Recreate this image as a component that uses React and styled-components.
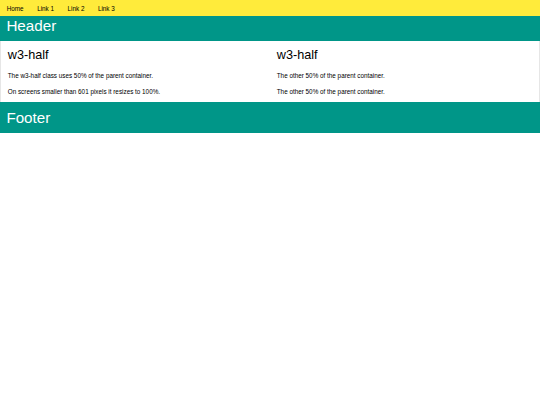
import React from 'react'
import styled, { createGlobalStyle } from 'styled-components'

const GlobalStyle = createGlobalStyle`
  * {
    box-sizing: border-box;
  }
  html, body {
    margin: 0;
    padding: 0;
    background: #ffffff;
  }
  body {
    font-family: 'Liberation Sans', Arial, sans-serif;
    font-size: 6.33px;
    line-height: 1.5;
    color: #000000;
  }
`

const Nav = styled.nav`
  display: flex;
  background: #ffeb3b;
  color: #000000;
  height: 16.25px;
`

const NavLink = styled.a`
  display: block;
  padding: 3.6px 6.75px 3.15px;
  color: inherit;
  text-decoration: none;
  white-space: nowrap;
  font-size: 6.33px;
  line-height: 1.5;
`

const Banner = styled.header`
  background: #009688;
  color: #ffffff;
  padding: ${(p) => (p.$top ? '1.4px 6.4px 0' : '0.01em 6.4px')};
  height: ${(p) => (p.$top ? '24.45px' : 'auto')};
  overflow: hidden;
`

const BannerTitle = styled.h1`
  font-family: 'Liberation Sans', Arial, sans-serif;
  font-weight: 400;
  font-size: 15.19px;
  line-height: ${(p) => (p.$tight ? 1 : 1.5)};
  margin: ${(p) => (p.$tight ? 0 : '5.4px 0 3.04px')};
`

const Row = styled.div`
  display: flex;
  border-left: 1px solid #e6e6e6;
  border-right: 1px solid #e6e6e6;
`

const Half = styled.div`
  width: 50%;
  padding: 0.01em 6.75px;
`

const HalfTitle = styled.h2`
  font-family: 'Liberation Sans', Arial, sans-serif;
  font-weight: 400;
  font-size: 12.66px;
  line-height: 1.5;
  margin: 4.22px 0;
  position: relative;
  top: 1.1px;
`

const Text = styled.p`
  margin: 6.33px 0;
  font-size: 6.33px;
  line-height: 1.5;
  position: relative;
  top: 0.8px;
`

const columns = [
  {
    title: 'w3-half',
    lines: [
      'The w3-half class uses 50% of the parent container.',
      'On screens smaller than 601 pixels it resizes to 100%.',
    ],
  },
  {
    title: 'w3-half',
    lines: ['The other 50% of the parent container.', 'The other 50% of the parent container.'],
  },
]

export default function App() {
  return (
    <>
      <GlobalStyle />
      <Nav>
        {['Home', 'Link 1', 'Link 2', 'Link 3'].map((l) => (
          <NavLink key={l} href='#'>
            {l}
          </NavLink>
        ))}
      </Nav>
      <Banner $top>
        <BannerTitle $tight>Header</BannerTitle>
      </Banner>
      <Row>
        {columns.map((c, i) => (
          <Half key={i}>
            <HalfTitle>{c.title}</HalfTitle>
            {c.lines.map((t, j) => (
              <Text key={j}>{t}</Text>
            ))}
          </Half>
        ))}
      </Row>
      <Banner as='footer'>
        <BannerTitle>Footer</BannerTitle>
      </Banner>
    </>
  )
}
